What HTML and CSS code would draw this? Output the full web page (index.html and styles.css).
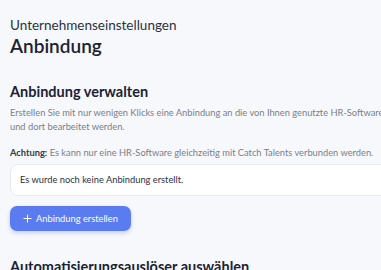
FILE: index.html
```html
<!DOCTYPE html>
<html lang="de">
<head>
  <meta charset="UTF-8">
  <meta name="viewport" content="width=device-width, initial-scale=1">
  <title>Anbindung</title>
  <link rel="stylesheet" href="styles.css">
</head>
<body>

<div class="page">
  <div class="page-header">
    <div class="page-subtitle">Unternehmenseinstellungen</div>
    <h1>Anbindung</h1>
  </div>

  <section class="section">
    <h2>Anbindung verwalten</h2>
    <p class="hint">Erstellen Sie mit nur wenigen Klicks eine Anbindung an die von Ihnen genutzte HR-Software, damit Stellen automatisch übernommen und dort bearbeitet werden.</p>
    <p class="hint hint-last"><strong>Achtung:</strong> Es kann nur eine HR-Software gleichzeitig mit Catch Talents verbunden werden.</p>

    <div class="empty-box">Es wurde noch keine Anbindung erstellt.</div>

    <button type="button" class="btn-primary">
      <svg width="9" height="9" viewBox="0 0 10 10"><path d="M5 0.5v9M0.5 5h9" stroke="#fff" stroke-width="1.1" fill="none"/></svg>
      Anbindung erstellen
    </button>
  </section>

  <section class="section section-next">
    <h2>Automatisierungsauslöser auswählen</h2>
  </section>
</div>

</body>
</html>
```

FILE: styles.css
```css
body {
  margin: 0;
  font-family: Lato, 'Noto Sans', sans-serif;
  background: #f7f8fc;
  color: #1b2233;
  overflow: hidden;
}

.page {
  width: 548px;
  padding: 16px 10px;
}

.page-subtitle {
  font-size: 13.5px;
  line-height: 18px;
  color: #2a3142;
}

h1 {
  margin: 0;
  font-size: 19px;
  line-height: 24px;
  font-weight: 600;
}

.section {
  margin-top: 24px;
}

.section-next {
  margin-top: 26px;
}

h2 {
  margin: 0 0 4px;
  font-size: 14.5px;
  line-height: 20px;
  font-weight: 700;
}

.hint {
  margin: 0 0 12px;
  font-size: 9.3px;
  line-height: 14px;
  color: #7a7f88;
}

.hint-last {
  margin-bottom: 4px;
}

.hint strong {
  color: #333a45;
  font-weight: 700;
}

.empty-box {
  width: 560px;
  background: #fff;
  border: 1px solid #e7e9ef;
  border-radius: 8px;
  padding: 9px 9px;
  font-size: 9.3px;
  line-height: 12px;
  color: #2a3142;
}

.btn-primary {
  display: inline-flex;
  align-items: center;
  gap: 4px;
  margin-top: 10px;
  padding: 0 13px 0 13px;
  height: 25px;
  background: #5b7cf0;
  color: #fff;
  border: none;
  border-radius: 7px;
  font-family: inherit;
  font-size: 9.3px;
  box-shadow: 0 2px 4px rgba(60, 80, 160, 0.25);
}
```
